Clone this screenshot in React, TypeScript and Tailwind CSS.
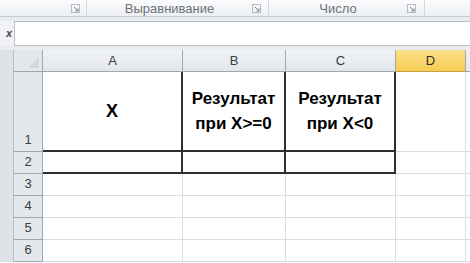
import React from 'react';

const cols = [
  { name: 'A', w: 'w-[140px]' },
  { name: 'B', w: 'w-[103px]' },
  { name: 'C', w: 'w-[110px]' },
  { name: 'D', w: 'w-[70px]' },
];

function Launcher() {
  return (
    <svg width="9" height="9" viewBox="0 0 9 9" className="shrink-0">
      <rect x="0.5" y="0.5" width="8" height="8" fill="none" stroke="#b8bcc2" />
      <path d="M3 3 L7 7 M7 4.5 V7 H4.5" stroke="#7d8288" fill="none" />
    </svg>
  );
}

function Ribbon() {
  return (
    <div className="h-[17px] flex bg-gradient-to-b from-[#fbfcfd] to-[#eceff3] border-b border-[#c5cad1] text-[13px] leading-none text-[#6e7278]">
      <div className="w-[87px] flex items-center justify-end pr-[6px] border-r border-[#d5d9de]">
        <Launcher />
      </div>
      <div className="w-[182px] flex items-center border-r border-[#d5d9de]">
        <span className="flex-1 text-center">Выравнивание</span>
        <span className="pr-[7px]"><Launcher /></span>
      </div>
      <div className="w-[156px] flex items-center border-r border-[#d5d9de]">
        <span className="flex-1 text-center">Число</span>
        <span className="pr-[8px]"><Launcher /></span>
      </div>
      <div className="flex-1" />
    </div>
  );
}

function FormulaBar() {
  return (
    <div className="h-[33px] bg-[#e9edf1] pt-[4px] pb-[4px]">
      <div className="h-full flex">
        <div className="w-[15px] border-r border-[#b9bec5] bg-[#f0f2f5] flex items-center justify-end pr-[2px] text-[11px] italic font-bold text-[#44484d] overflow-hidden">
          <span>x</span>
        </div>
        <div className="flex-1 bg-white border-y border-[#b9bec5]" />
      </div>
    </div>
  );
}

export default function App() {
  const rows = [
    { n: '1', h: 'h-[80px]' },
    { n: '2', h: 'h-[22px]' },
    { n: '3', h: 'h-[22px]' },
    { n: '4', h: 'h-[22px]' },
    { n: '5', h: 'h-[22px]' },
    { n: '6', h: 'h-[22px]' },
  ];
  return (
    <div className="w-[470px] h-[263px] overflow-hidden bg-white font-['Liberation_Sans',Arial,sans-serif]">
      <Ribbon />
      <FormulaBar />
      <div className="flex">
        <div className="w-[14px] shrink-0 bg-[#dde2e8] border-r border-[#b7bdc5]" />
        <div className="flex-1">
          {/* column headers */}
          <div className="flex h-[22px]">
            <div className="w-[29px] shrink-0 bg-[#e4e8ed] border-r border-b border-[#9ea6b0] flex items-end justify-end p-[3px]">
              <svg width="11" height="11" viewBox="0 0 11 11">
                <path d="M11 0 L11 11 L0 11 Z" fill="#d3d7dc" />
              </svg>
            </div>
            {cols.map((c) => (
              <div
                key={c.name}
                className={`${c.w} shrink-0 border-r border-b border-[#9ea6b0] flex items-center justify-center text-[13px] ${
                  c.name === 'D'
                    ? 'bg-gradient-to-b from-[#fbe08a] to-[#f6cd50] text-[#2d2d2d] border-b-[#c2a040]'
                    : 'bg-gradient-to-b from-[#f1f3f6] to-[#e2e6eb] text-[#3a3d42]'
                }`}
              >
                {c.name}
              </div>
            ))}
            <div className="flex-1 bg-gradient-to-b from-[#f1f3f6] to-[#e2e6eb] border-b border-[#9ea6b0]" />
          </div>
          {rows.map((r, ri) => (
            <div key={r.n} className={`flex ${r.h}`}>
              <div className="w-[29px] shrink-0 bg-[#e4e8ed] border-r border-b border-[#9ea6b0] flex items-end justify-center pb-[2px] text-[13px] text-[#3a3d42]">
                {r.n}
              </div>
              {cols.map((c, ci) => {
                const boxed = ri < 2 && ci < 3;
                return (
                  <div
                    key={c.name}
                    className={`${c.w} shrink-0 flex flex-col items-center justify-center text-[17px] font-bold leading-[25px] text-black ${
                      boxed ? 'border-r-2 border-r-[#2f2f2f] border-b-2 border-b-[#2f2f2f]' : 'border-r border-r-[#dadcdf] border-b border-b-[#dadcdf]'
                    }`}
                  >
                    {ri === 0 && ci === 0 && <span className="text-[18px]">X</span>}
                    {ri === 0 && ci === 1 && (
                      <>
                        <span>Результат</span>
                        <span>при X&gt;=0</span>
                      </>
                    )}
                    {ri === 0 && ci === 2 && (
                      <>
                        <span>Результат</span>
                        <span>при X&lt;0</span>
                      </>
                    )}
                  </div>
                );
              })}
              <div className="flex-1 border-b border-b-[#dadcdf]" />
            </div>
          ))}
        </div>
      </div>
    </div>
  );
}
